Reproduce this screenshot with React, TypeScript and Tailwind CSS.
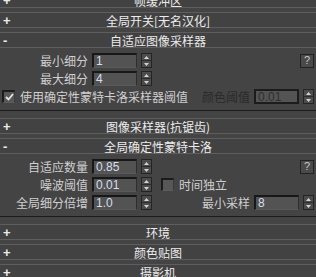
import React from 'react';

const cjk = "font-['Noto_Sans_CJK_SC','Noto_Sans',sans-serif]";

const Rollout: React.FC<{ sign: '+' | '-'; title: string; className?: string }> = ({ sign, title, className = '' }) => (
  <div className={`grid h-[16px] shrink-0 grid-cols-[24px_1fr_24px] items-center border-y border-[#5e5e5e] bg-[#424242] ${className}`}>
    <span className="pl-[3px] font-['Liberation_Sans',sans-serif] text-[13px] font-bold leading-none text-[#ececec]">{sign}</span>
    <span className="pt-[2px] text-center text-[12px] leading-none text-[#ececec]">{title}</span>
    <span />
  </div>
);

const Spinner: React.FC = () => (
  <div className="flex h-[15px] w-[11px] flex-col border border-[#242424] bg-[#4c4c4c]">
    <div className="flex flex-1 items-center justify-center border-b border-[#2c2c2c]">
      <svg width="5" height="3" viewBox="0 0 5 3">
        <path d="M2.5 0L5 3H0z" fill="#d4d4d4" />
      </svg>
    </div>
    <div className="flex flex-1 items-center justify-center">
      <svg width="5" height="3" viewBox="0 0 5 3">
        <path d="M0 0h5L2.5 3z" fill="#d4d4d4" />
      </svg>
    </div>
  </div>
);

const NumInput: React.FC<{ value: string; disabled?: boolean }> = ({ value, disabled }) => (
  <div
    className={
      disabled
        ? "flex h-[15px] w-[45px] items-center border-2 border-[#1c1c1c] bg-[#545454] pl-[2px] font-['Liberation_Sans',sans-serif] text-[12px] leading-none text-[#2e2e2e]"
        : "flex h-[15px] w-[45px] items-center border-t-2 border-l-2 border-r border-b border-t-[#181818] border-l-[#181818] border-r-[#2e2e2e] border-b-[#5a5a5a] bg-[#535353] pl-[2px] font-['Liberation_Sans',sans-serif] text-[12px] leading-none text-[#d3dfec]"
    }
  >
    {value}
  </div>
);

const Spin: React.FC<{ label: string; value: string; labelWidth?: string; disabled?: boolean }> = ({
  label,
  value,
  labelWidth = 'w-[88px]',
  disabled,
}) => (
  <div className="flex items-center">
    <span className={`${labelWidth} text-right text-[12px] leading-none ${disabled ? 'text-[#2a2a2a]' : 'text-[#cfcfcf]'}`}>
      {label}
    </span>
    <div className="ml-[4px]">
      <NumInput value={value} disabled={disabled} />
    </div>
    <div className="ml-[4px]">
      <Spinner />
    </div>
  </div>
);

const Check: React.FC<{ checked?: boolean; label: string }> = ({ checked, label }) => (
  <div className="flex items-center">
    <div className="flex h-[13px] w-[13px] items-center justify-center border-t-2 border-l-2 border-r border-b border-t-[#1c1c1c] border-l-[#1c1c1c] border-r-[#3a3a3a] border-b-[#5c5c5c] bg-[#575757]">
      {checked && (
        <svg width="9" height="8" viewBox="0 0 9 8">
          <path d="M1 4l2.5 2.5L8 1" stroke="#e4e4e4" strokeWidth="1.8" fill="none" />
        </svg>
      )}
    </div>
    <span className="ml-[5px] text-[12px] leading-none text-[#cfcfcf]">{label}</span>
  </div>
);

const Help: React.FC = () => (
  <div className="flex h-[14px] w-[14px] items-center justify-center border border-[#222] bg-[#4a4a4a] font-['Liberation_Sans',sans-serif] text-[11px] leading-none text-[#c6c6c6]">
    ?
  </div>
);

const Body: React.FC<{ children: React.ReactNode }> = ({ children }) => (
  <div className="flex h-[63px] shrink-0 flex-col gap-[3px] border-b border-[#1c1c1c] pt-[5px]">{children}</div>
);

const Row: React.FC<{ children: React.ReactNode }> = ({ children }) => (
  <div className="flex h-[15px] items-center justify-between pr-[2px]">{children}</div>
);

export default function App() {
  return (
    <div className={`flex h-[277px] w-[316px] flex-col overflow-hidden bg-[#444444] ${cjk}`}>
      <Rollout sign="+" title="帧缓冲区" className="mt-[-8px]" />
      <Rollout sign="+" title="全局开关[无名汉化]" className="mt-[4px]" />
      <Rollout sign="-" title="自适应图像采样器" className="mt-[4px]" />
      <Body>
        <Row>
          <Spin label="最小细分" value="1" />
          <Help />
        </Row>
        <Row>
          <Spin label="最大细分" value="4" />
        </Row>
        <Row>
          <div className="pl-[2px]">
            <Check checked label="使用确定性蒙特卡洛采样器阈值" />
          </div>
          <Spin label="颜色阈值" value="0.01" labelWidth="w-auto" disabled />
        </Row>
      </Body>
      <Rollout sign="+" title="图像采样器(抗锯齿)" className="mt-[7px]" />
      <Rollout sign="-" title="全局确定性蒙特卡洛" className="mt-[4px]" />
      <Body>
        <Row>
          <Spin label="自适应数量" value="0.85" />
          <Help />
        </Row>
        <div className="flex h-[15px] items-center">
          <Spin label="噪波阈值" value="0.01" />
          <div className="ml-[9px]">
            <Check label="时间独立" />
          </div>
        </div>
        <Row>
          <Spin label="全局细分倍增" value="1.0" />
          <Spin label="最小采样" value="8" labelWidth="w-auto" />
        </Row>
      </Body>
      <Rollout sign="+" title="环境" className="mt-[7px]" />
      <Rollout sign="+" title="颜色贴图" className="mt-[4px]" />
      <Rollout sign="+" title="摄影机" className="mt-[4px]" />
    </div>
  );
}
